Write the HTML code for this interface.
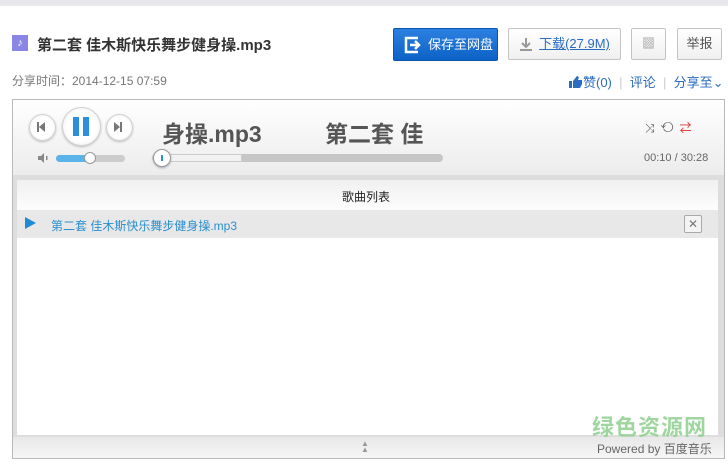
<!DOCTYPE html>
<html><head><meta charset="utf-8"><style>
*{margin:0;padding:0;box-sizing:border-box}
body{width:728px;height:464px;background:#fff;font-family:"Liberation Sans","Noto Sans CJK SC",sans-serif;position:relative;overflow:hidden}
.a{position:absolute}
.topbar{left:0;top:0;width:728px;height:6px;background:#e8e8ec}
.title{left:37px;top:34px;font-size:15px;font-weight:bold;color:#333}
.icon{left:12px;top:35px;width:16px;height:16px;background:#8a86e6;color:#fff;font-size:11px;text-align:center;line-height:16px}
.time{left:12px;top:72px;font-size:12px;color:#777}
.btn{border:1px solid #c4c4c4;border-radius:2px;background:linear-gradient(#fff,#f0f0f0);height:32px;font-size:13px;color:#555;text-align:center;line-height:30px}
.save{left:393px;top:28px;width:105px;height:33px;background:linear-gradient(#2b80e0,#0d62c6);border:1px solid #0b55ad;border-radius:2px;color:#fff;font-size:13px;line-height:31px;padding-left:34px}
.links{top:72px;font-size:13px;color:#2a6cc2}
.box{left:12px;top:99px;width:713px;height:360px;border:1px solid #b9b9b9;background:#ddd}
.player{left:13px;top:100px;width:711px;height:75px;background:linear-gradient(#fff,#f7f7f7 40%,#ececec)}
.list{left:17px;top:180px;width:701px;height:255px;background:#fff}
.foot{left:13px;top:437px;width:711px;height:21px;background:linear-gradient(#e8e8e8,#f6f6f6)}
.cbtn{border-radius:50%;border:1px solid #d0d0d0;background:radial-gradient(#fff 55%,#e8e8e8);box-shadow:0 1px 2px #bbb}
</style></head><body>
<div class="a topbar"></div>
<div class="a icon">♪</div>
<div class="a title">第二套 佳木斯快乐舞步健身操.mp3</div>
<div class="a time">分享时间：2014-12-15 07:59</div>
<div class="a save"><svg class="a" style="left:10px;top:7px" width="18" height="18" viewBox="0 0 18 18"><path d="M14 2H2v14h12" fill="none" stroke="#fff" stroke-width="2.5"/><path d="M6 9h8M11 5l4 4-4 4" fill="none" stroke="#fff" stroke-width="2.5"/></svg>保存至网盘</div>
<div class="a btn" style="left:508px;top:28px;width:113px;padding-left:20px;"><svg class="a" style="left:10px;top:8px" width="14" height="14"><path d="M7 1v8M3 6l4 4 4-4M1 13h12" fill="none" stroke="#999" stroke-width="2"/></svg><span style="text-decoration:underline;color:#2a6cc2">下载(27.9M)</span></div>
<div class="a btn" style="left:631px;top:28px;width:35px;color:#aaa">▩</div>
<div class="a btn" style="left:677px;top:28px;width:45px">举报</div>
<div class="a links" style="left:569px"><svg width="14" height="12" style="vertical-align:-1px"><rect x="0" y="5" width="3" height="7" fill="#2a6cc2"/><path d="M4 5L8 0c2 0 2 2 1 4h4v4l-2 4H4z" fill="#2a6cc2"/></svg>赞(0) <span style="color:#ccc">&nbsp;|&nbsp;</span> 评论 <span style="color:#ccc">&nbsp;|&nbsp;</span> 分享至⌄</div>
<div class="a box"></div>
<div class="a player"></div>
<div class="a cbtn" style="left:29px;top:114px;width:27px;height:27px"></div>
<div class="a" style="left:37px;top:122px;width:2px;height:10px;background:#777"></div>
<div class="a" style="left:39px;top:122px;border:5px solid transparent;border-right:6px solid #777;border-left:0"></div>
<div class="a cbtn" style="left:62px;top:107px;width:39px;height:39px"></div>
<div class="a" style="left:73px;top:117px;width:6px;height:19px;background:#2a90dc"></div>
<div class="a" style="left:83px;top:117px;width:6px;height:19px;background:#2a90dc"></div>
<div class="a cbtn" style="left:106px;top:114px;width:27px;height:27px"></div>
<div class="a" style="left:114px;top:122px;border:5px solid transparent;border-left:6px solid #777;border-right:0"></div>
<div class="a" style="left:120px;top:122px;width:2px;height:10px;background:#777"></div>
<svg class="a" style="left:38px;top:153px" width="10" height="10"><path d="M0 3h3l3-3v10L3 7H0z" fill="#888"/><rect x="8" y="3" width="1.5" height="4" fill="#888"/></svg>
<div class="a" style="left:56px;top:155px;width:69px;height:7px;border-radius:4px;background:#ccc"></div>
<div class="a" style="left:56px;top:155px;width:34px;height:7px;border-radius:4px;background:#5ab4ea"></div>
<div class="a" style="left:84px;top:152px;width:12px;height:12px;border-radius:50%;background:#fff;border:1px solid #999"></div>
<div class="a" style="left:152px;top:154px;width:291px;height:8px;border-radius:4px;background:#c6c6c6"></div>
<div class="a" style="left:160px;top:154px;width:82px;height:8px;background:#f2f2f2;border:1px solid #ccc"></div>
<div class="a" style="left:153px;top:149px;width:18px;height:18px;border-radius:50%;background:#fff;border:1px solid #999;box-shadow:0 1px 2px #aaa"></div>
<div class="a" style="left:161px;top:155px;width:2px;height:6px;background:#2a90dc"></div>
<div class="a" style="left:162px;top:115px;font-size:23px;font-weight:bold;color:#555">身操.mp3</div>
<div class="a" style="left:325px;top:115px;font-size:23px;font-weight:bold;color:#555">第二套 佳</div>
<div class="a" style="left:645px;top:119px;font-size:12px;color:#555;letter-spacing:6px">⤨⟲<span style="color:#d33">⇄</span></div>
<div class="a" style="left:644px;top:152px;font-size:11px;color:#666">00:10 / 30:28</div>
<div class="a list"></div>
<div class="a" style="left:17px;top:180px;width:701px;height:30px;background:linear-gradient(#f0f0f0,#fdfdfd)"></div>
<div class="a" style="left:342px;top:188px;font-size:12px;color:#222">歌曲列表</div>
<div class="a" style="left:17px;top:210px;width:701px;height:28px;background:#e8e8e8"></div>
<div class="a" style="left:25px;top:217px;border:6px solid transparent;border-left:11px solid #1f8ad6;border-right:0"></div>
<div class="a" style="left:51px;top:217px;font-size:12px;color:#2a8fcf">第二套 佳木斯快乐舞步健身操.mp3</div>
<div class="a" style="left:684px;top:215px;width:18px;height:18px;border:1px solid #aaa;border-radius:2px;background:#f4f4f4;font-size:12px;color:#777;text-align:center;line-height:16px">✕</div>
<div class="a foot"></div>
<div class="a" style="left:361px;top:441px;font-size:8px;color:#999;line-height:6px">▲<br>▲</div>
<div class="a" style="left:592px;top:410px;font-size:22px;font-weight:bold;color:#8fd08f;opacity:.85;letter-spacing:1px">绿色资源网</div>
<div class="a" style="left:597px;top:440px;font-size:12px;color:#666">Powered by 百度音乐</div>
</body></html>
